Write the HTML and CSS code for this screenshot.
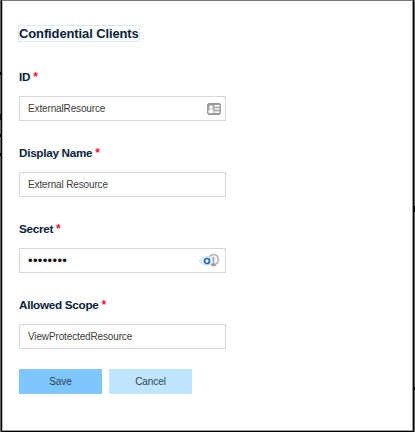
FILE: index.html
```html
<!DOCTYPE html>
<html lang="en">
<head>
<meta charset="utf-8">
<title>Confidential Clients</title>
<link rel="stylesheet" href="styles.css">
</head>
<body>
<main class="dialog">
  <h1 class="title">Confidential Clients</h1>
  <form class="form">
    <div class="field">
      <div class="label"><span>ID</span><span class="req">*</span></div>
      <div class="input"><span>ExternalResource</span>
        <svg class="card-icon" width="14" height="12" viewBox="0 0 14 12"><rect x=".75" y=".75" width="12.5" height="10.5" rx="1.5" fill="#a6a6a6" stroke="#949494" stroke-width="1.3"/><circle cx="4" cy="4.2" r="1.7" fill="#fff"/><path d="M1.500 9.900V8q0-1.500 2.500-1.900Q6.500 6.500 6.500 8v1.900z" fill="#fff"/><path d="M7.500 2.900h5M7.500 6h5M7.500 9.100h5" stroke="#fafafa" stroke-width="1.700"/></svg>
      </div>
    </div>
    <div class="field">
      <div class="label"><span>Display Name</span><span class="req">*</span></div>
      <div class="input"><span>External Resource</span></div>
    </div>
    <div class="field">
      <div class="label"><span>Secret</span><span class="req">*</span></div>
      <div class="input"><span class="dots">••••••••</span>
        <svg class="key-icon" width="22" height="16" viewBox="0 0 22 16"><circle cx="15.500" cy="6.500" r="5.100" fill="#f3f3f3" stroke="#b3b3b3" stroke-width="1.500"/><path d="M15.500 4v9.500M13 12h5" stroke="#999" stroke-width="1.400" fill="none"/><path d="M1 8q3.500-4.500 8-4.500t6 4.500q-2 4.500-6 4.500T1 8z" fill="#e1f0fc" stroke="#c3e0f7" stroke-width=".8"/><circle cx="9" cy="8" r="2.500" fill="#fff" stroke="#2564ac" stroke-width="1.700"/></svg>
      </div>
    </div>
    <div class="field">
      <div class="label"><span>Allowed Scope</span><span class="req">*</span></div>
      <div class="input"><span>ViewProtectedResource</span></div>
    </div>
    <div class="actions">
      <button type="button" class="btn save">Save</button>
      <button type="button" class="btn cancel">Cancel</button>
    </div>
  </form>
</main>
<i class="mark m1"></i><i class="mark m2"></i><i class="mark m3"></i><i class="mark m4"></i><i class="mark r1"></i><i class="mark r2"></i>
</body>
</html>
```
FILE: styles.css
```css
* { box-sizing: border-box; }
body {
  margin: 0;
  width: 415px;
  height: 432px;
  overflow: hidden;
  background: #666;
  padding: 0 1px;
  font-family: "Liberation Sans", Arial, sans-serif;
}
.dialog {
  height: 432px;
  background: #fff;
  border: 1px solid #000;
  border-top-color: #777;
  box-shadow: inset 1px 0 #bbb, inset -1px -1px #999;
  padding: 24px 17px 0;
}
.title {
  width: 122px;
  height: 17px;
  margin: 0 0 0 -1px;
  padding-left: 1px;
  font-size: 13px;
  line-height: 18px;
  letter-spacing: -.12px;
  color: #071d3c;
  white-space: nowrap;
  box-shadow: inset 0 0 0 1px #d5eafa;
}
.form { padding-top: 27px; }
.field { height: 76px; }
.label {
  display: flex;
  gap: 3px;
  height: 27px;
  font-size: 11.700px;
  line-height: 16px;
  font-weight: 700;
  letter-spacing: -.28px;
  color: #071d3c;
  white-space: nowrap;
}
.req { color: #f0142c; font-size: 12px; }
.input {
  display: flex;
  align-items: center;
  justify-content: space-between;
  width: 207px;
  height: 25px;
  border: 1px solid #cfdad9;
  padding: 0 4px 0 8px;
  font-size: 10px;
  line-height: 12px;
  letter-spacing: -.14px;
  color: #3c3c3c;
  white-space: nowrap;
}
.key-icon { margin-right: 1px; }
.dots { font-size: 13px; color: #111; letter-spacing: .35px; }
.actions { display: flex; gap: 7px; margin-top: -4px; }
.btn {
  width: 83px;
  height: 25px;
  border: 0;
  padding: 0;
  font: 10px/25px "Liberation Sans", Arial, sans-serif;
  letter-spacing: -.1px;
  color: #2d4152;
}
.save { background: #7dc6ff; }
.cancel { background: #bfe5ff; }
.mark { position: absolute; left: 0; width: 1px; height: 3px; background: #000; }
.m1 { top: 72px; }
.m2 { top: 114px; height: 6px; background: #071829; }
.m3 { top: 134px; }
.m4 { top: 153px; }
.r1 { left: 414px; top: 206px; height: 6px; }
.r2 { left: 414px; top: 387px; }
```
